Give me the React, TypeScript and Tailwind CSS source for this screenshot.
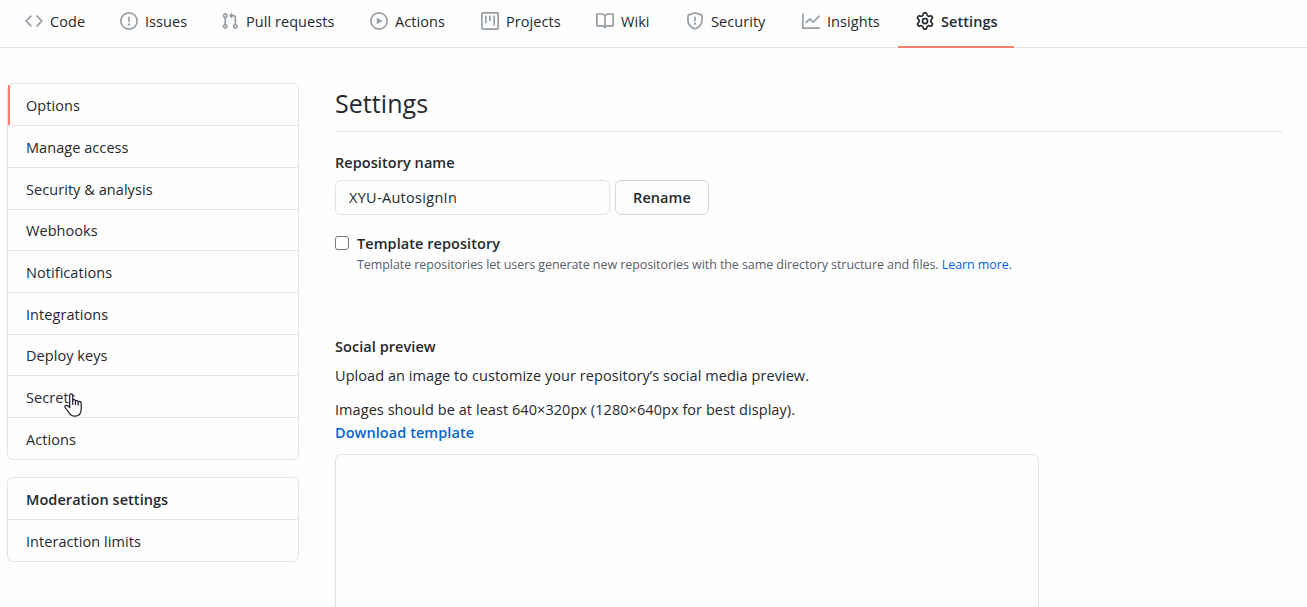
import React from 'react';

const paths = {
  code: 'M4.72 3.22a.75.75 0 011.06 1.06L2.06 8l3.72 3.72a.75.75 0 11-1.06 1.06L.47 8.53a.75.75 0 010-1.06l4.25-4.25zm6.56 0a.75.75 0 10-1.06 1.06L13.94 8l-3.72 3.72a.75.75 0 101.06 1.06l4.25-4.25a.75.75 0 000-1.06l-4.25-4.25z',
  issue: 'M8 1.5a6.5 6.5 0 100 13 6.5 6.5 0 000-13zM0 8a8 8 0 1116 0A8 8 0 010 8zm9 3a1 1 0 11-2 0 1 1 0 012 0zm-.25-6.25a.75.75 0 00-1.5 0v3.5a.75.75 0 001.5 0v-3.5z',
  pull: 'M7.177 3.073L9.573.677A.25.25 0 0110 .854v4.792a.25.25 0 01-.427.177L7.177 3.427a.25.25 0 010-.354zM3.75 2.5a.75.75 0 100 1.5.75.75 0 000-1.5zm-2.25.75a2.25 2.25 0 113 2.122v5.256a2.251 2.251 0 11-1.5 0V5.372A2.25 2.25 0 011.5 3.25zM11 2.5h-1V4h1a1 1 0 011 1v5.628a2.251 2.251 0 101.5 0V5A2.5 2.5 0 0011 2.5zm1 10.25a.75.75 0 111.5 0 .75.75 0 01-1.5 0zM3.75 12a.75.75 0 100 1.5.75.75 0 000-1.5z',
  play: 'M1.5 8a6.5 6.5 0 1113 0 6.5 6.5 0 01-13 0zM8 0a8 8 0 100 16A8 8 0 008 0zM6.379 5.227A.25.25 0 006 5.442v5.117a.25.25 0 00.379.214l4.264-2.559a.25.25 0 000-.428L6.379 5.227z',
  project: 'M1.75 0A1.75 1.75 0 000 1.75v12.5C0 15.216.784 16 1.75 16h12.5A1.75 1.75 0 0016 14.25V1.75A1.75 1.75 0 0014.25 0H1.75zM1.5 1.75a.25.25 0 01.25-.25h12.5a.25.25 0 01.25.25v12.5a.25.25 0 01-.25.25H1.75a.25.25 0 01-.25-.25V1.75zM11.75 3a.75.75 0 00-.75.75v7.5a.75.75 0 001.5 0v-7.5a.75.75 0 00-.75-.75zm-8.25.75a.75.75 0 011.5 0v5.5a.75.75 0 01-1.5 0v-5.5zM8 3a.75.75 0 00-.75.75v3.5a.75.75 0 001.5 0v-3.5A.75.75 0 008 3z',
  book: 'M0 1.75A.75.75 0 01.75 1h4.253c1.227 0 2.317.59 3 1.501A3.744 3.744 0 0111.006 1h4.245a.75.75 0 01.75.75v10.5a.75.75 0 01-.75.75h-4.507a2.25 2.25 0 00-1.591.659l-.622.621a.75.75 0 01-1.06 0l-.622-.621A2.25 2.25 0 005.258 13H.75a.75.75 0 01-.75-.75V1.75zm8.755 3a2.25 2.25 0 012.25-2.25H14.5v9h-3.757c-.71 0-1.4.201-1.992.572l.004-7.322zm-1.504 7.324l.004-5.073-.002-2.253A2.25 2.25 0 005.003 2.5H1.5v9h3.757a3.75 3.75 0 011.994.574z',
  shield: 'M7.467.133a1.75 1.75 0 011.066 0l5.25 1.68A1.75 1.75 0 0115 3.48V7c0 1.566-.32 3.182-1.303 4.682-.983 1.498-2.585 2.813-5.032 3.855a1.7 1.7 0 01-1.33 0c-2.447-1.042-4.049-2.357-5.032-3.855C1.32 10.182 1 8.566 1 7V3.48a1.75 1.75 0 011.217-1.667l5.25-1.68zm.61 1.429a.25.25 0 00-.153 0l-5.25 1.68a.25.25 0 00-.174.238V7c0 1.358.275 2.666 1.057 3.86.784 1.194 2.121 2.34 4.366 3.297a.2.2 0 00.154 0c2.245-.956 3.582-2.104 4.366-3.298C13.225 9.666 13.5 8.36 13.5 7V3.48a.25.25 0 00-.174-.237l-5.25-1.68zM9 10.5a1 1 0 11-2 0 1 1 0 012 0zm-.25-5.75a.75.75 0 10-1.5 0v3a.75.75 0 001.5 0v-3z',
  graph: 'M1.5 1.75a.75.75 0 00-1.5 0v12.5c0 .414.336.75.75.75h14.5a.75.75 0 000-1.5H1.5V1.75zm14.28 2.53a.75.75 0 00-1.06-1.06L10 7.94 7.53 5.47a.75.75 0 00-1.06 0L3.22 8.72a.75.75 0 001.06 1.06L7 7.06l2.47 2.47a.75.75 0 001.06 0l5.25-5.25z',
  gear: 'M7.429 1.525a6.593 6.593 0 011.142 0c.036.003.108.036.137.146l.289 1.105c.147.56.55.967.997 1.189.174.086.341.183.501.29.417.278.97.423 1.53.27l1.102-.303c.11-.03.175.016.195.046.219.31.41.641.573.989.014.031.022.11-.059.19l-.815.806c-.411.406-.562.957-.53 1.456a4.588 4.588 0 010 .582c-.032.499.119 1.05.53 1.456l.815.806c.08.08.073.159.059.19a6.494 6.494 0 01-.573.99c-.02.029-.086.074-.195.045l-1.103-.303c-.559-.153-1.112-.008-1.529.27-.16.107-.327.204-.5.29-.449.222-.851.628-.998 1.189l-.289 1.105c-.029.11-.101.143-.137.146a6.613 6.613 0 01-1.142 0c-.036-.003-.108-.037-.137-.146l-.289-1.105c-.147-.56-.55-.967-.997-1.189a4.502 4.502 0 01-.501-.29c-.417-.278-.97-.423-1.53-.27l-1.102.303c-.11.03-.175-.016-.195-.046a6.492 6.492 0 01-.573-.989c-.014-.031-.022-.11.059-.19l.815-.806c.411-.406.562-.957.53-1.456a4.587 4.587 0 010-.582c.032-.499-.119-1.05-.53-1.456l-.815-.806c-.08-.08-.073-.159-.059-.19a6.44 6.44 0 01.573-.99c.02-.029.086-.075.195-.045l1.103.303c.559.153 1.112.008 1.529-.27.16-.107.327-.204.5-.29.449-.222.851-.628.998-1.189l.289-1.105c.029-.11.101-.143.137-.146zM8 0c-.236 0-.47.01-.701.03-.743.065-1.29.615-1.458 1.261l-.29 1.106c-.017.066-.078.158-.211.224a5.994 5.994 0 00-.668.386c-.123.082-.233.09-.3.071L3.27 2.776c-.644-.177-1.392.02-1.82.63a7.977 7.977 0 00-.704 1.217c-.315.675-.111 1.422.363 1.891l.815.806c.05.048.098.147.088.294a6.084 6.084 0 000 .772c.01.147-.038.246-.088.294l-.815.806c-.474.469-.678 1.216-.363 1.891.2.428.436.835.704 1.218.428.609 1.176.806 1.82.63l1.103-.303c.066-.019.176-.011.299.071.213.143.436.272.668.386.133.066.194.158.212.224l.289 1.106c.169.646.715 1.196 1.458 1.26a8.094 8.094 0 001.402 0c.743-.064 1.29-.614 1.458-1.26l.29-1.106c.017-.066.078-.158.211-.224a5.98 5.98 0 00.668-.386c.123-.082.233-.09.3-.071l1.102.302c.644.177 1.392-.02 1.82-.63.268-.382.505-.789.704-1.217.315-.675.111-1.422-.364-1.891l-.814-.806c-.05-.048-.098-.147-.088-.294a6.1 6.1 0 000-.772c-.01-.147.039-.246.088-.294l.814-.806c.475-.469.679-1.216.364-1.891a7.992 7.992 0 00-.704-1.218c-.428-.609-1.176-.806-1.82-.63l-1.103.303c-.066.019-.176.011-.299-.071a5.991 5.991 0 00-.668-.386c-.133-.066-.194-.158-.212-.224L10.16 1.29C9.99.645 9.444.095 8.701.031A8.094 8.094 0 008 0zm1.5 8a1.5 1.5 0 11-3 0 1.5 1.5 0 013 0zM11 8a3 3 0 11-6 0 3 3 0 016 0z',
};

type IconName = keyof typeof paths;

const tabs: { icon: IconName; label: string; size: string; active?: boolean }[] = [
  { icon: 'code', label: 'Code', size: 'w-[95px]' },
  { icon: 'issue', label: 'Issues', size: 'w-[101px]' },
  { icon: 'pull', label: 'Pull requests', size: 'w-[149px]' },
  { icon: 'play', label: 'Actions', size: 'w-[111px]' },
  { icon: 'project', label: 'Projects', size: 'w-[115px]' },
  { icon: 'book', label: 'Wiki', size: 'w-[90px]' },
  { icon: 'shield', label: 'Security', size: 'w-[116px]' },
  { icon: 'graph', label: 'Insights', size: 'w-[114px]' },
  { icon: 'gear', label: 'Settings', size: 'w-[116px]', active: true },
];

const menu = [
  { label: 'Options', size: 'h-[42px]' },
  { label: 'Manage access', size: 'h-[42px]' },
  { label: 'Security & analysis', size: 'h-[42px]' },
  { label: 'Webhooks', size: 'h-[41px]' },
  { label: 'Notifications', size: 'h-[42px]' },
  { label: 'Integrations', size: 'h-[42px]' },
  { label: 'Deploy keys', size: 'h-[41px]' },
  { label: 'Secrets', size: 'h-[42px]' },
  { label: 'Actions', size: 'h-[41px]' },
];

function Icon({ name }: { name: IconName }) {
  return (
    <svg viewBox="0 0 16 16" className="size-[18px] shrink-0" fill="currentColor" fillRule="evenodd">
      <path d={paths[name]} />
    </svg>
  );
}

function HandPointer() {
  return (
    <svg viewBox="0 0 18 24" className="absolute left-[56px] top-[17px] h-6 w-[18px]" fill="#fff" stroke="#1c1c28" strokeWidth="1.2" strokeLinejoin="round">
      <path d="M5.7 14.5V2.4C5.7.4 8.7.4 8.7 2.4V7.4C9.5 6.2 11.3 6.6 11.5 8C12.6 7 14 7.5 14.2 8.8C15.5 8 17.2 8.7 17.2 10.3V16C17.2 20.5 14.6 23.2 10.8 23.2C7.5 23.2 6 21.6 4.6 19.2L1.1 14.5C.2 12.8 2.2 11.6 3.7 12.8Z" />
      <path d="M8.7 7.4V11.8M11.5 8V12M14.2 8.8V12.5" fill="none" />
    </svg>
  );
}

export default function App() {
  return (
    <div className="h-[607px] overflow-hidden bg-[#fefefe] font-['Open_Sans','Noto_Sans',sans-serif] text-[14.5px] leading-6 tracking-[0.06px] text-[#24292e]">
      <nav className="flex h-12 border-b border-[#e1e4e8] pl-[7px]">
        {tabs.map((t) => (
          <a
            key={t.label}
            className={`${t.size} flex h-12 shrink-0 items-center gap-[7px] whitespace-nowrap border-b-2 pb-[4px] pl-[18px] ${
              t.active ? 'border-[#f9826c] font-[550]' : 'border-transparent'
            }`}
          >
            <span className={t.active ? 'flex' : 'flex text-[#959da5]'}>
              <Icon name={t.icon} />
            </span>
            <span className="pt-0.5">{t.label}</span>
          </a>
        ))}
      </nav>

      <div className="flex pl-[7px] pt-[35px]">
        <aside className="w-[292px] shrink-0">
          <div className="rounded-md border border-[#e1e4e8]">
            {menu.map((m, i) => (
              <div
                key={m.label}
                className={`${m.size} relative flex items-center pl-[18px] ${m.size === 'h-[41px]' && i < 8 ? 'pt-px' : 'pt-[3px]'} ${
                  i < menu.length - 1 ? 'border-b border-[#e1e4e8]' : ''
                }`}
              >
                {i === 0 && <span className="absolute bottom-0 left-0 top-px w-0.5 bg-[#f9826c]" />}
                {m.label}
                {m.label === 'Secrets' && <HandPointer />}
              </div>
            ))}
          </div>
          <div className="mt-[17px] rounded-md border border-[#e1e4e8]">
            <div className="flex h-[42px] items-center border-b border-[#e1e4e8] pl-[18px] pt-0.5 font-[550]">
              Moderation settings
            </div>
            <div className="flex h-[41px] items-center pl-[18px] pt-0.5">Interaction limits</div>
          </div>
        </aside>

        <main className="ml-9 w-[947px]">
          <h2 className="h-[49px] border-b border-[#e1e4e8] pt-px text-[25px] leading-[38px]">Settings</h2>
          <div className="pt-[19px] font-[550]">Repository name</div>
          <div className="mt-[5px] flex gap-[5px]">
            <div className="flex h-[35px] w-[275px] items-center rounded-md border border-[#e1e4e8] pl-[13px] pt-px tracking-[0.3px]">
              XYU-AutosignIn
            </div>
            <button className="h-[35px] w-[94px] rounded-md border border-[#d5d8da] font-[550]">Rename</button>
          </div>
          <div className="mt-[16px] flex h-6 items-center gap-2">
            <span className="size-3.5 rounded-[3px] border border-[#767676] bg-white" />
            <span className="pt-0.5 font-[550]">Template repository</span>
          </div>
          <p className="pl-[22px] pt-px text-[12.5px] leading-[18px] tracking-[-0.075px] text-[#586069]">
            Template repositories let users generate new repositories with the same directory structure and files.{' '}
            <a className="text-[#0366d6]">Learn more</a>.
          </p>
          <div className="mt-[61px] font-[550]">Social preview</div>
          <p className="mt-[5px]">Upload an image to customize your repository’s social media preview.</p>
          <p className="mt-[10px] leading-[23px]">
            Images should be at least 640×320px (1280×640px for best display).
            <br />
            <a className="font-[550] text-[#0366d6]">Download template</a>
          </p>
          <div className="mt-[10px] h-[352px] w-[704px] rounded-md border border-[#e1e4e8]" />
        </main>
      </div>
    </div>
  );
}
